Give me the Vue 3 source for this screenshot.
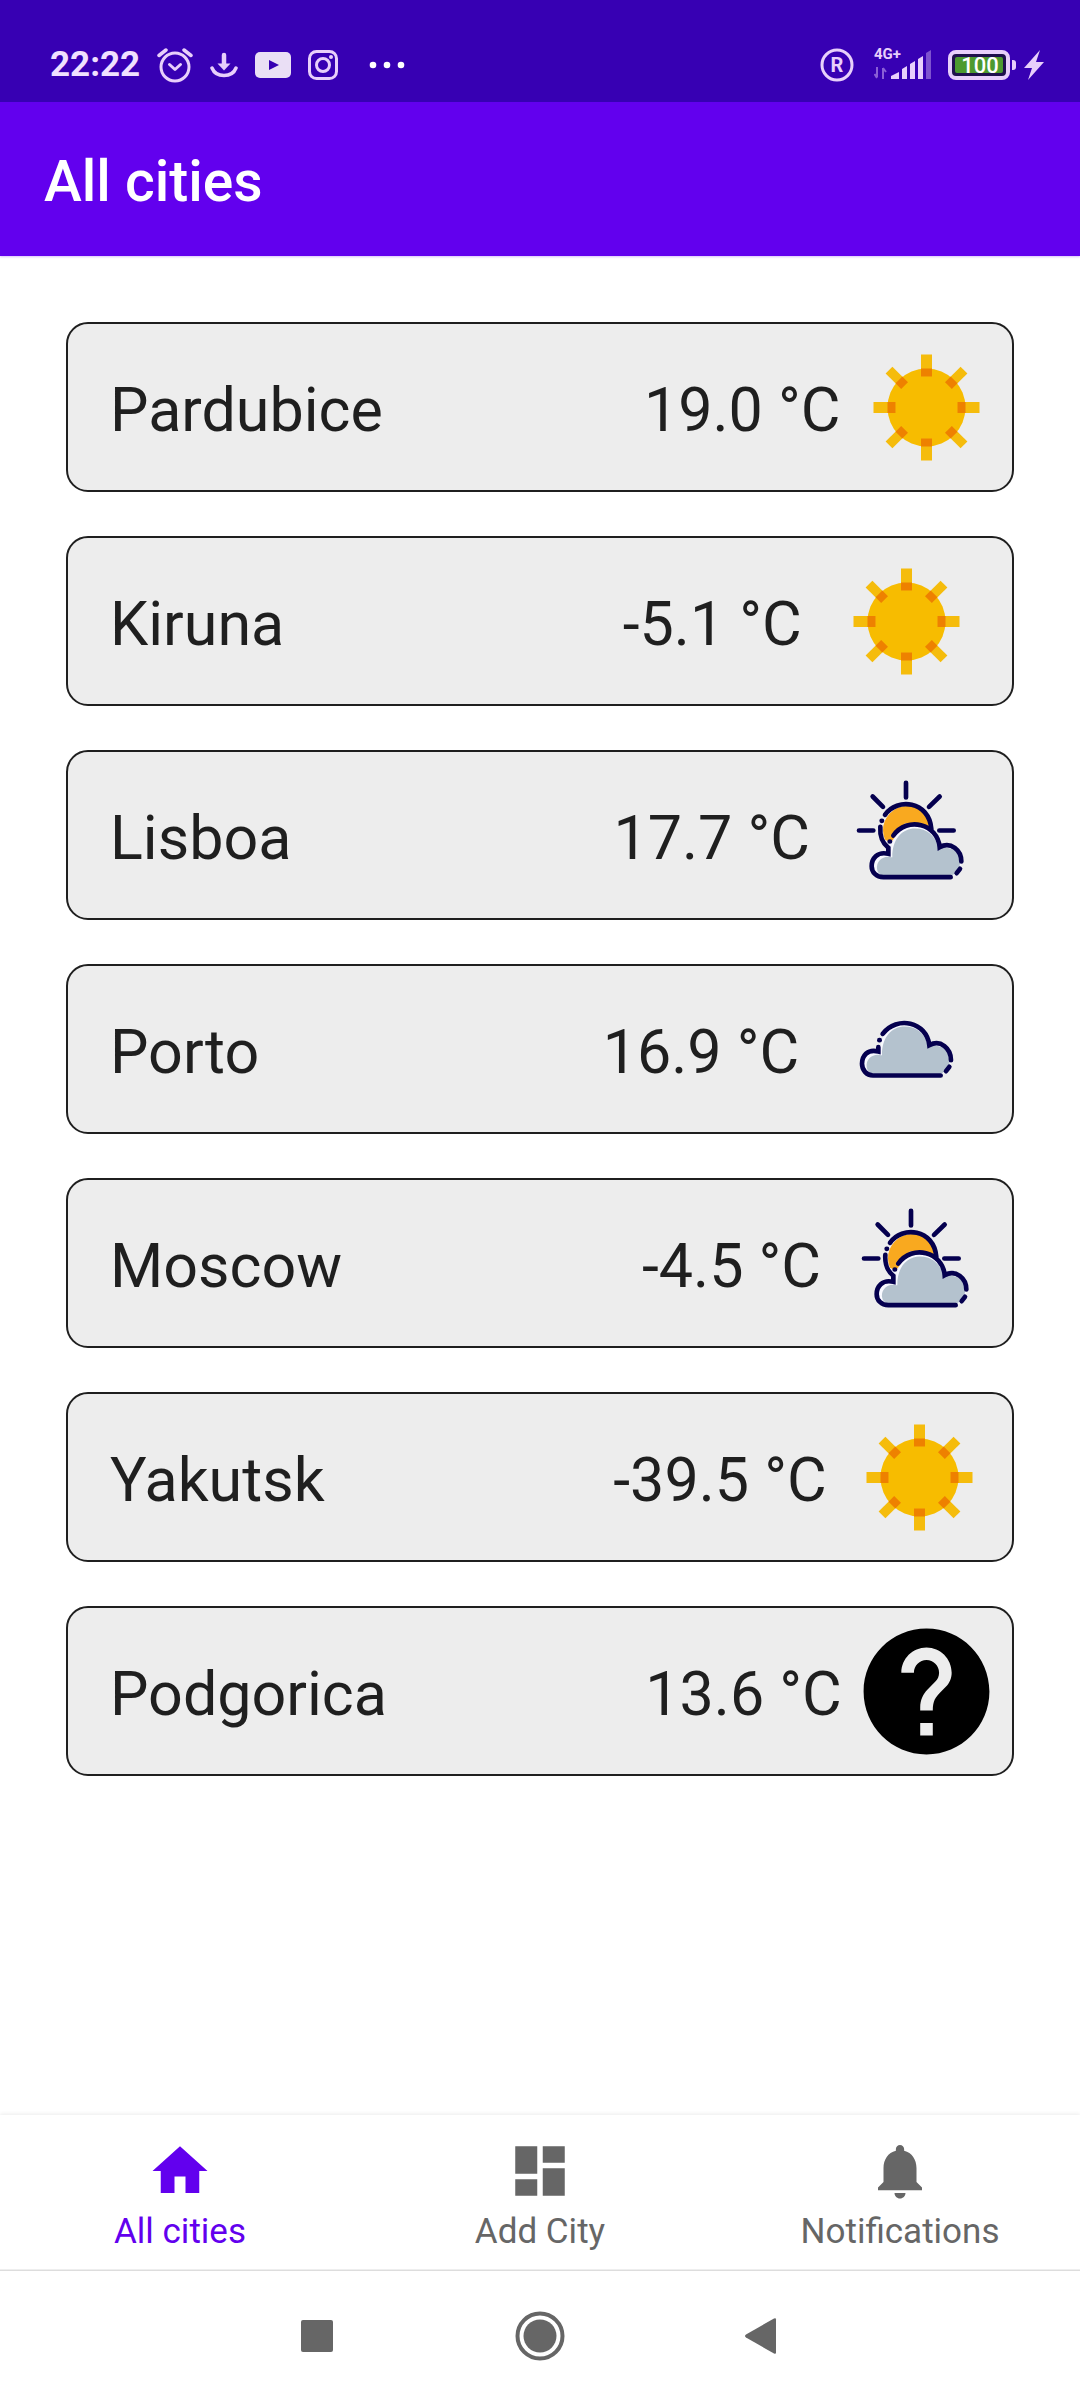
<script setup>
const cities = [
  { name: 'Pardubice', temp: '19.0 °C', icon: 'sun' },
  { name: 'Kiruna', temp: '-5.1 °C', icon: 'sun' },
  { name: 'Lisboa', temp: '17.7 °C', icon: 'partly' },
  { name: 'Porto', temp: '16.9 °C', icon: 'cloud' },
  { name: 'Moscow', temp: '-4.5 °C', icon: 'partly' },
  { name: 'Yakutsk', temp: '-39.5 °C', icon: 'sun' },
  { name: 'Podgorica', temp: '13.6 °C', icon: 'unknown' },
]

const tabs = [
  { label: 'All cities', active: true, path: 'M10 20v-6h4v6h5v-8h3L12 3 2 12h3v8z' },
  { label: 'Add City', active: false, path: 'M3 13h8V3H3v10zm0 8h8v-6H3v6zm10 0h8V11h-8v10zm0-18v6h8V3h-8z' },
  {
    label: 'Notifications',
    active: false,
    path: 'M12 22c1.1 0 2-.9 2-2h-4c0 1.1.89 2 2 2zm6-6v-5c0-3.07-1.64-5.64-4.5-6.32V4c0-.83-.67-1.5-1.5-1.5s-1.5.67-1.5 1.5v.68C7.63 5.36 6 7.92 6 11v5l-2 2v1h16v-1l-2-2z',
  },
]

const straightRays = [0, 90, 180, 270]
const diagonalRays = [45, 135, 225, 315]
</script>

<template>
  <div class="screen">
    <div class="status">
      <div class="status-left">
        <span class="clock">22:22</span>
        <svg class="line" width="36" height="36" viewBox="0 0 36 36" aria-hidden="true">
          <circle cx="18" cy="20" r="14" stroke-width="3" />
          <path d="M12.500 17.500l5.500 5 5.500-5" stroke-width="3" />
          <path d="M2 8.500L9 3M34 8.500L27 3" stroke-width="3.500" />
        </svg>
        <svg class="line" width="28" height="36" viewBox="0 0 28 36" aria-hidden="true">
          <path d="M14 8v9" stroke-width="4.500" />
          <path class="solid" d="M7.500 16.500h13L14 23.500z" />
          <path d="M2 21c2 5 6 7.500 12 7.500s10-2.500 12-7.500" stroke-width="3.500" />
        </svg>
        <svg width="36" height="36" viewBox="0 0 36 36" aria-hidden="true">
          <rect x="0" y="5" width="36" height="26" rx="5" fill="#eadff5" />
          <path d="M14 13v10l10-5z" fill="#3700b3" />
        </svg>
        <svg class="line" width="30" height="36" viewBox="0 0 30 36" aria-hidden="true">
          <rect x="1.500" y="4.500" width="27" height="27" rx="7" stroke-width="3" />
          <circle cx="15" cy="18" r="6.500" stroke-width="3" />
          <circle class="solid" cx="23" cy="10" r="2" />
        </svg>
        <svg class="more" width="36" height="36" viewBox="0 0 36 36" aria-hidden="true">
          <circle cx="4" cy="18" r="3.300" /><circle cx="18" cy="18" r="3.300" /><circle cx="32" cy="18" r="3.300" />
        </svg>
      </div>
      <div class="status-right">
        <svg class="line" width="34" height="36" viewBox="0 0 34 36" aria-hidden="true">
          <circle cx="17" cy="18" r="15" stroke-width="3" />
          <text x="17" y="25" font-size="20" font-weight="700" text-anchor="middle">R</text>
        </svg>
        <svg class="signal" width="58" height="44" viewBox="0 -4 58 44" aria-hidden="true">
          <text x="0" y="12" font-size="15" font-weight="700">4G+</text>
          <path d="M17 32v-3l8-4v7zM28 32V22l5-3v13zM36 32V17l5-3v18zM44 32V12l5-3v23z" />
          <path d="M52 32V6l5-3v29z" opacity=".4" />
          <path class="arrows" d="M3 20v10M0.500 27L3 31M9 32V21M12 25L9 21" />
        </svg>
        <svg class="battery" width="68" height="36" viewBox="0 0 68 36" aria-label="100">
          <rect x="2" y="5" width="58" height="26" rx="6" fill="#20104d" stroke="#e8cffb" stroke-width="4" />
          <rect x="7" y="10" width="48" height="16" rx="2" fill="#4c9a2f" />
          <path d="M64 13h1a3 3 0 0 1 3 3v4a3 3 0 0 1-3 3h-1z" fill="#e8cffb" />
          <text x="32" y="26" font-size="22" font-weight="500" text-anchor="middle">100</text>
        </svg>
        <svg width="20" height="36" viewBox="0 0 20 36" aria-hidden="true">
          <path d="M16 3L0 21h8L4 33 20 15h-8z" fill="#e8cffb" />
        </svg>
      </div>
    </div>

    <header class="appbar">
      <h1>All cities</h1>
    </header>

    <main>
      <ul class="cities">
        <li v-for="city in cities" :key="city.name" class="city">
          <span class="name">{{ city.name }}</span>
          <span class="temp">{{ city.temp }}</span>
          <span class="weather">
            <svg v-if="city.icon === 'sun'" viewBox="-75.500 -75.500 151 151" aria-label="Sunny">
              <circle r="39" fill="#f7bc00" />
              <g v-for="a in straightRays" :key="a" :transform="`rotate(${a})`">
                <rect x="-5.500" y="-53" width="11" height="22" fill="#f5bc0c" />
                <rect x="-5.500" y="-39" width="11" height="8" fill="#ee8100" />
              </g>
              <g v-for="a in diagonalRays" :key="a" :transform="`rotate(${a})`">
                <rect x="-4.800" y="-53" width="9.600" height="21" fill="#f5bc0c" />
                <rect x="-4.800" y="-39" width="9.600" height="8" fill="#ee8100" />
              </g>
            </svg>

            <svg v-else-if="city.icon === 'partly'" viewBox="43 -1.500 453 453" aria-label="Partly cloudy">
              <circle cx="254" cy="209" r="74" fill="#f2f2fb" />
              <path d="M190 238A72 72 0 0 1 323 180L326 205 250 188 208 246z" fill="#f9a91f" />
              <path d="M208 284C168 265 148 300 152 322C155 342 170 350 185 350H385C412 345 424 318 418 296C412 268 380 250 352 263C346 222 315 195 276 195C236 195 208 230 208 284z" fill="#f8f9ff" />
              <path d="M208 290C185 284 163 302 166 325C168 340 178 345 190 346H385C408 342 420 315 414 292C405 268 378 254 351 266C343 226 316 204 280 204C242 204 211 235 212 290z" fill="#b4c2ce" />
              <g class="ink">
                <path d="M253 67v44M153 108l31 31M354 108l-32 31M112 210h43M353 210h43" />
                <path d="M190 163C226 111 322 121 329 205" />
                <path d="M176 199C174 229 181 246 200 262V280C166 272 150 295 150 317C150 335 164 350 185 350H387" />
                <path d="M215 225C257 166 348 190 354 260C388 242 419 270 419 303" />
                <path d="M405 338l10-13" />
                <path d="M180 181h1M204 243h1" />
              </g>
            </svg>

            <svg v-else-if="city.icon === 'cloud'" viewBox="30 -19.500 453 453" aria-label="Cloudy">
              <path d="M182 218C142 199 122 234 126 256C129 276 144 284 159 284H359C386 279 398 252 392 230C386 202 354 184 326 197C320 156 289 129 250 129C210 129 180 160 182 218z" fill="#f8f9ff" />
              <path d="M182 224C159 218 137 236 140 259C142 274 152 279 164 280H359C382 276 394 249 388 226C379 202 352 188 325 200C317 160 290 138 254 138C216 138 185 169 186 224z" fill="#b4c2ce" />
              <g class="ink">
                <path d="M188 160C231 104 320 124 328 194C362 176 393 204 393 239" />
                <path d="M175 200V213C141 204 126 228 126 250C126 268 139 285 159 285H362" />
                <path d="M378 272l10-13" />
                <path d="M178 179h1" />
              </g>
            </svg>

            <svg v-else viewBox="0 0 24 24" aria-label="Unknown">
              <path d="M12 2C6.480 2 2 6.480 2 12s4.480 10 10 10 10-4.480 10-10S17.520 2 12 2zm1 17h-2v-2h2v2zm2.070-7.750l-.9.920C13.450 12.900 13 13.500 13 15h-2v-.5c0-1.100.450-2.100 1.170-2.830l1.240-1.260c.370-.360.590-.860.590-1.410 0-1.100-.9-2-2-2s-2 .9-2 2H8c0-2.210 1.790-4 4-4s4 1.790 4 4c0 .880-.360 1.680-.930 2.250z" />
            </svg>
          </span>
        </li>
      </ul>
    </main>

    <nav class="tabs">
      <a v-for="tab in tabs" :key="tab.label" href="#" class="tab" :class="{ active: tab.active }">
        <svg viewBox="0 0 24 24" aria-hidden="true"><path :d="tab.path" /></svg>
        <span>{{ tab.label }}</span>
      </a>
    </nav>

    <div class="system">
      <button type="button" aria-label="Recent apps">
        <svg width="50" height="50" viewBox="0 0 50 50"><rect x="9" y="9" width="32" height="32" rx="2" /></svg>
      </button>
      <button type="button" aria-label="Home">
        <svg width="50" height="50" viewBox="0 0 50 50">
          <circle cx="25" cy="25" r="22.500" fill="none" stroke="#666" stroke-width="4" />
          <circle cx="25" cy="25" r="16.500" />
        </svg>
      </button>
      <button type="button" aria-label="Back">
        <svg width="50" height="50" viewBox="0 0 50 50"><path d="M8 23.500L36 7.500q2-1 2 1v33q0 2-2 1L8 26.500q-2-1.500 0-3z" /></svg>
      </button>
    </div>
  </div>
</template>

<style>
body {
  margin: 0;
  background: #fff;
}
</style>

<style scoped>
.screen {
  display: flex;
  flex-direction: column;
  min-height: 100vh;
  font-family: Roboto, "Liberation Sans", sans-serif;
  color: #1f1f1f;
}

svg {
  display: block;
  flex: none;
}

.status {
  box-sizing: border-box;
  display: flex;
  align-items: center;
  justify-content: space-between;
  height: 102px;
  padding: 27px 36px 0 50px;
  background: #3700b3;
}

.status-left,
.status-right {
  display: flex;
  align-items: center;
  gap: 17px;
}

.status-right {
  gap: 16px;
}

.status-right svg:last-child {
  margin-left: -8px;
}

.signal {
  margin-left: 4px;
}

.clock {
  font-size: 35px;
  line-height: 36px;
  font-weight: 700;
  color: #f0e0ff;
}

.line {
  fill: none;
  stroke: #e8cffb;
  stroke-linecap: round;
  stroke-linejoin: round;
}

.line .solid,
.line text {
  fill: #e8cffb;
  stroke: none;
}

.more {
  margin-left: 14px;
  fill: #fff;
}

.signal {
  fill: #e8cffb;
}

.signal .arrows {
  fill: none;
  stroke: #8a5fd6;
  stroke-width: 2;
}

.battery text {
  fill: #fff;
}

.appbar {
  box-sizing: border-box;
  display: flex;
  align-items: center;
  height: 154px;
  padding: 6px 44px 0;
  background: #6200ee;
  box-shadow: 0 1px 2px rgba(98, 0, 238, 0.25);
}

h1 {
  margin: 0;
  font-size: 57px;
  line-height: 64px;
  font-weight: 500;
  color: #fff;
}

main {
  flex: 1;
  padding: 66px 66px 44px;
}

.cities {
  display: flex;
  flex-direction: column;
  gap: 44px;
  margin: 0;
  padding: 0;
  list-style: none;
}

.city {
  box-sizing: border-box;
  display: flex;
  align-items: center;
  height: 170px;
  padding-left: 42px;
  border: 2px solid #1f1f1f;
  border-radius: 22px;
  background: #ededed;
}

.name,
.temp {
  flex: 1 1 auto;
  padding-top: 6px;
  font-size: 61px;
  line-height: 72px;
  white-space: nowrap;
}

.temp {
  text-align: right;
}

.weather {
  display: flex;
  justify-content: center;
  flex: 1 1 41px;
  min-width: 0;
}

.weather svg {
  width: 151px;
  height: 151px;
}

.ink {
  fill: none;
  stroke: #05004f;
  stroke-width: 14;
  stroke-linecap: round;
}

.tabs {
  box-sizing: border-box;
  display: flex;
  height: 155px;
  border-bottom: 1px solid #eee;
  background: #fff;
  box-shadow: 0 -1px 4px rgba(0, 0, 0, 0.08);
}

.tab {
  display: flex;
  flex: 1;
  flex-direction: column;
  align-items: center;
  gap: 8px;
  padding-top: 23px;
  font-size: 35px;
  line-height: 40px;
  color: #666;
  fill: #666;
  text-decoration: none;
}

.tab svg {
  width: 66px;
  height: 66px;
}

.tab.active {
  color: #6200ee;
  fill: #6200ee;
}

.system {
  box-sizing: border-box;
  display: flex;
  align-items: center;
  justify-content: center;
  height: 130px;
  background: #fff;
  border-top: 1px solid #ddd;
}

.system button {
  display: flex;
  justify-content: center;
  width: 223px;
  padding: 0;
  border: 0;
  background: none;
}

.system svg {
  fill: #666;
}
</style>
